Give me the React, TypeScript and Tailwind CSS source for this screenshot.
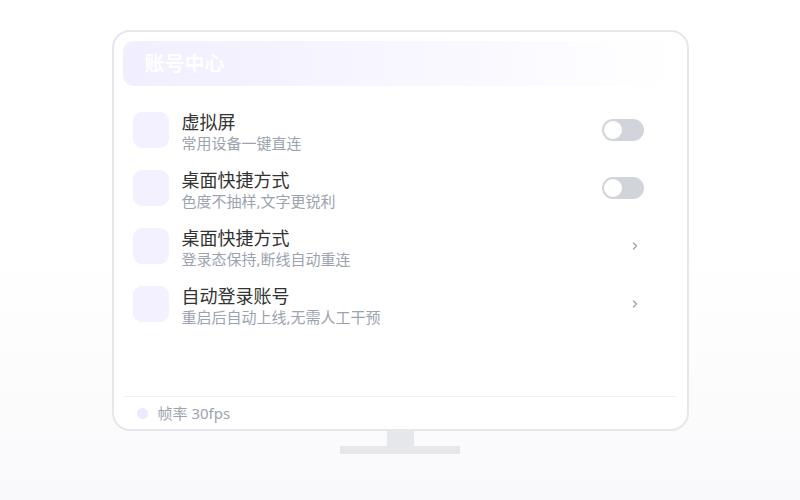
import React from "react";

const rows = [
  { title: "虚拟屏", sub: "常用设备一键直连", kind: "toggle" },
  { title: "桌面快捷方式", sub: "色度不抽样,文字更锐利", kind: "toggle" },
  { title: "桌面快捷方式", sub: "登录态保持,断线自动重连", kind: "chevron" },
  { title: "自动登录账号", sub: "重启后自动上线,无需人工干预", kind: "chevron" },
];

export default function App() {
  return (
    <div
      className="w-[800px] h-[500px] bg-gradient-to-b from-white via-white to-[#f9f9fb] flex flex-col items-center pt-[30px]"
      style={{ fontFamily: '"Noto Sans", "Noto Sans CJK SC", sans-serif' }}
    >
      <div className="w-[577px] h-[401px] border-2 border-[#e5e7eb] rounded-[18px] bg-white px-[9px] pt-[9px] flex flex-col">
        <div className="h-[45px] rounded-[10px] bg-gradient-to-r from-[#f1eeff] via-[#f8f6ff] to-white flex items-center justify-between px-[22px]">
          <span className="text-[20px] font-bold text-white leading-none">账号中心</span>
          <span className="text-[14px] text-white leading-none">设置</span>
        </div>
        <div className="flex flex-col pt-[26px] pl-[10px] pr-[34px]">
          {rows.map((r, i) => (
            <div key={i} className="h-[58px] flex items-start">
              <div className="w-[36px] h-[36px] rounded-[9px] bg-[#f3f0ff] shrink-0" />
              <div className="ml-[13px] flex flex-col -mt-[1px]">
                <span className="text-[18px] leading-[22px] text-[#333333]">{r.title}</span>
                <span className="text-[15px] leading-[20px] text-[#9ca3af]">{r.sub}</span>
              </div>
              <div className="flex-1" />
              {r.kind === "toggle" ? (
                <div className="mt-[7px] w-[42px] h-[22px] rounded-full bg-[#d1d5db] p-[2px] flex items-center">
                  <div className="w-[18px] h-[18px] rounded-full bg-white" />
                </div>
              ) : (
                <div className="mt-[10px] mr-[1px] w-[16px] h-[16px] flex items-center justify-center">
                  <svg width="10" height="10" viewBox="0 0 10 10" fill="none">
                    <path d="M3.5 2 L6.5 5 L3.5 8" stroke="#9ca3af" strokeWidth="1.4" strokeLinecap="round" strokeLinejoin="round" />
                  </svg>
                </div>
              )}
            </div>
          ))}
        </div>
        <div className="flex-1" />
        <div className="mx-[2px] border-t border-[#eef0f3] h-[33px] flex items-center pl-[12px]">
          <div className="w-[11px] h-[11px] rounded-full bg-[#ede9fe]" />
          <span className="ml-[10px] text-[15px] text-[#9ca3af] leading-none">帧率 30fps</span>
        </div>
      </div>
      <div className="w-[27px] h-[15px] bg-[#e5e7eb]" />
      <div className="w-[120px] h-[8px] bg-[#e5e7eb]" />
    </div>
  );
}
